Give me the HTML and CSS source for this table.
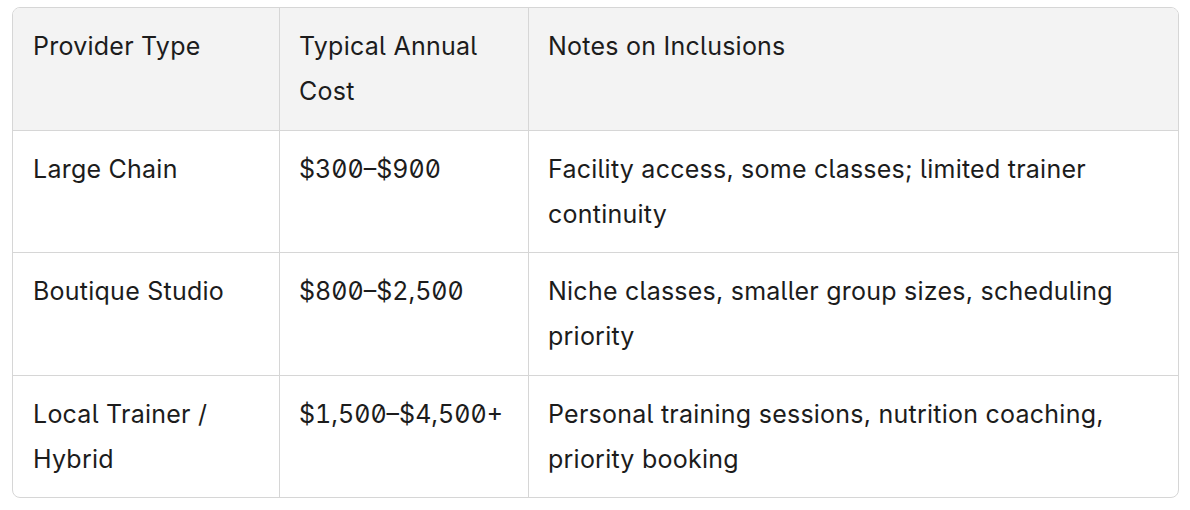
FILE: index.html
```html
<!DOCTYPE html>
<html>
<head>
<meta charset="utf-8">
<link rel="stylesheet" href="styles.css">
</head>
<body>
<div class="wrap">
  <table class="grid">
    <colgroup>
      <col class="c1"><col class="c2"><col class="c3">
    </colgroup>
    <thead>
      <tr><th>Provider Type</th><th>Typical Annual Cost</th><th>Notes on Inclusions</th></tr>
    </thead>
    <tbody>
      <tr><td>Large Chain</td><td class="num">$300–$900</td><td>Facility access, some classes; limited trainer continuity</td></tr>
      <tr><td>Boutique Studio</td><td class="num">$800–$2,500</td><td>Niche classes, smaller group sizes, scheduling priority</td></tr>
      <tr><td>Local Trainer / Hybrid</td><td class="num">$1,500–$4,500+</td><td>Personal training sessions, nutrition coaching, priority booking</td></tr>
    </tbody>
  </table>
</div>
</body>
</html>
```

FILE: styles.css
```css
html, body { margin: 0; padding: 0; background: #ffffff; }
.wrap { padding: 7px 11px 0 12px; }
.grid {
  width: 1167px;
  table-layout: fixed;
  border-collapse: separate;
  border-spacing: 0;
  border: 1px solid #d6d6d6;
  border-radius: 8px;
  overflow: hidden;
  font-family: Inter, "Noto Sans", sans-serif;
  font-size: 25px;
  letter-spacing: 0.24px;
  line-height: 45px;
  color: #1c1c1c;
  font-feature-settings: "cv05" 1;
}
.c1 { width: 266px; }
.c2 { width: 249px; }
.grid th, .grid td {
  text-align: left;
  vertical-align: top;
  font-weight: 400;
  padding: 16px 20px 15.5px 19px;
  border-left: 1px solid #d6d6d6;
  border-top: 1px solid #d6d6d6;
}
.grid th:first-child, .grid td:first-child { border-left: none; padding-left: 20px; }
.grid thead th { border-top: none; background: #f3f3f3; }
.num { font-feature-settings: "tnum" 1, "zero" 1; letter-spacing: 0; }
```
